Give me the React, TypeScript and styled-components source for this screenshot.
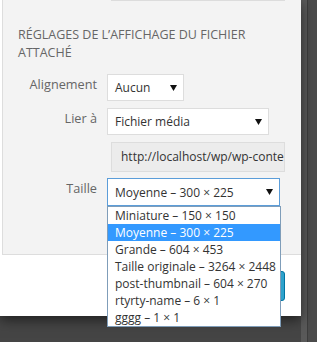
import React from 'react'
import styled, { createGlobalStyle } from 'styled-components'

const GlobalStyle = createGlobalStyle`
  html, body {
    margin: 0;
    padding: 0;
    background: #454545;
    font-family: "Open Sans", "Liberation Sans", sans-serif;
    font-size: 13px;
  }
`

const Screen = styled.div`
  display: flex;
  width: 317px;
  height: 342px;
  overflow: hidden;
  background: #454545;
`

const Modal = styled.div`
  display: flex;
  flex-direction: column;
  width: 301px;
  height: 316px;
  background: #fff;
  box-shadow: 0 4px 12px rgba(0, 0, 0, 0.55);
  position: relative;
  z-index: 1;
`

const RightStrip = styled.div`
  flex: 1;
  display: flex;
  height: 342px;
`

const StripLight = styled.div`
  width: 6px;
  background: #595959;
`

const StripLine = styled.div`
  width: 1px;
  background: #3c3c3c;
`

const StripDark = styled.div`
  flex: 1;
  background: #4b4b4b;
`

const Sidebar = styled.div`
  height: 254px;
  margin-left: 2px;
  border-left: 1px solid #ddd;
  border-bottom: 1px solid #ddd;
  background: #f3f3f3;
  position: relative;
`

const PrevField = styled.div`
  margin-left: 108px;
  width: 174px;
  height: 1px;
  background: #dcdcdc;
`

const Heading = styled.h3`
  margin: 25px 0 12px;
  padding-left: 15px;
  width: 260px;
  font-size: 12.5px;
  line-height: 18px;
  font-weight: 400;
  color: #666;
  text-transform: uppercase;
`

const Row = styled.div<{ gap: number }>`
  display: flex;
  align-items: flex-start;
  margin-bottom: ${p => p.gap}px;
  position: relative;
`

const Label = styled.span`
  width: 94px;
  margin-right: 10px;
  padding-top: 1px;
  text-align: right;
  font-size: 12.7px;
  line-height: 18px;
  color: #666;
`

const SelectBox = styled.div<{ w: number; focused?: boolean }>`
  box-sizing: border-box;
  display: flex;
  align-items: center;
  justify-content: space-between;
  width: ${p => p.w}px;
  height: ${p => (p.focused ? 28 : 27)}px;
  padding: 0 6px 0 7px;
  background: #fff;
  border: 1px solid ${p => (p.focused ? '#5b9dd9' : '#ddd')};
  color: #333;
  font-size: 12px;
  line-height: 25px;
`

const Arrow = () => (
  <svg width="7" height="6" viewBox="0 0 7 6">
    <path d="M0 0 L7 0 L3.5 6 Z" fill="#111" />
  </svg>
)

const UrlInput = styled.div`
  box-sizing: border-box;
  margin-left: 108px;
  width: 174px;
  height: 30px;
  padding: 0 2px 0 9px;
  background: #ececec;
  border: 1px solid #ddd;
  color: #333;
  font-size: 12px;
  line-height: 28px;
  white-space: nowrap;
  overflow: hidden;
`

const OptionList = styled.ul`
  position: absolute;
  top: 28px;
  left: 104px;
  z-index: 5;
  box-sizing: border-box;
  width: 174px;
  margin: 0;
  padding: 0;
  list-style: none;
  background: #fff;
  border: 1px solid #7f9db9;
`

const Option = styled.li<{ active?: boolean }>`
  height: 17px;
  padding-left: 7px;
  font-size: 12px;
  line-height: 17px;
  white-space: nowrap;
  color: ${p => (p.active ? '#fff' : '#333')};
  background: ${p => (p.active ? '#3399ff' : 'transparent')};
`

const Footer = styled.div`
  flex: 1;
  display: flex;
  justify-content: flex-end;
  padding: 16px 16px 0 0;
`

const InsertButton = styled.button`
  height: 30px;
  width: 120px;
  border-radius: 3px;
  border: 1px solid #0074a2;
  background: #2ea2cc;
  color: #fff;
  font-family: inherit;
  font-size: 13px;
`

const sizes = [
  'Miniature – 150 × 150',
  'Moyenne – 300 × 225',
  'Grande – 604 × 453',
  'Taille originale – 3264 × 2448',
  'post-thumbnail – 604 × 270',
  'rtyrty-name – 6 × 1',
  'gggg – 1 × 1',
]

const App: React.FC = () => (
  <>
    <GlobalStyle />
    <Screen>
      <Modal>
        <Sidebar>
          <PrevField />
          <Heading>Réglages de l’affichage du fichier attaché</Heading>
          <Row gap={7}>
            <Label>Alignement</Label>
            <SelectBox w={77}>
              <span>Aucun</span>
              <Arrow />
            </SelectBox>
          </Row>
          <Row gap={7}>
            <Label>Lier à</Label>
            <SelectBox w={162}>
              <span>Fichier média</span>
              <Arrow />
            </SelectBox>
          </Row>
          <Row gap={6}>
            <UrlInput>http://localhost/wp/wp-content/uploads/2014/photo.jpg</UrlInput>
          </Row>
          <Row gap={0}>
            <Label>Taille</Label>
            <SelectBox w={173} focused>
              <span>Moyenne – 300 × 225</span>
              <Arrow />
            </SelectBox>
            <OptionList>
              {sizes.map(s => (
                <Option key={s} active={s.startsWith('Moyenne')}>
                  {s}
                </Option>
              ))}
            </OptionList>
          </Row>
        </Sidebar>
        <Footer>
          <InsertButton>Insérer</InsertButton>
        </Footer>
      </Modal>
      <RightStrip>
        <StripLight />
        <StripLine />
        <StripDark />
      </RightStrip>
    </Screen>
  </>
)

export default App
